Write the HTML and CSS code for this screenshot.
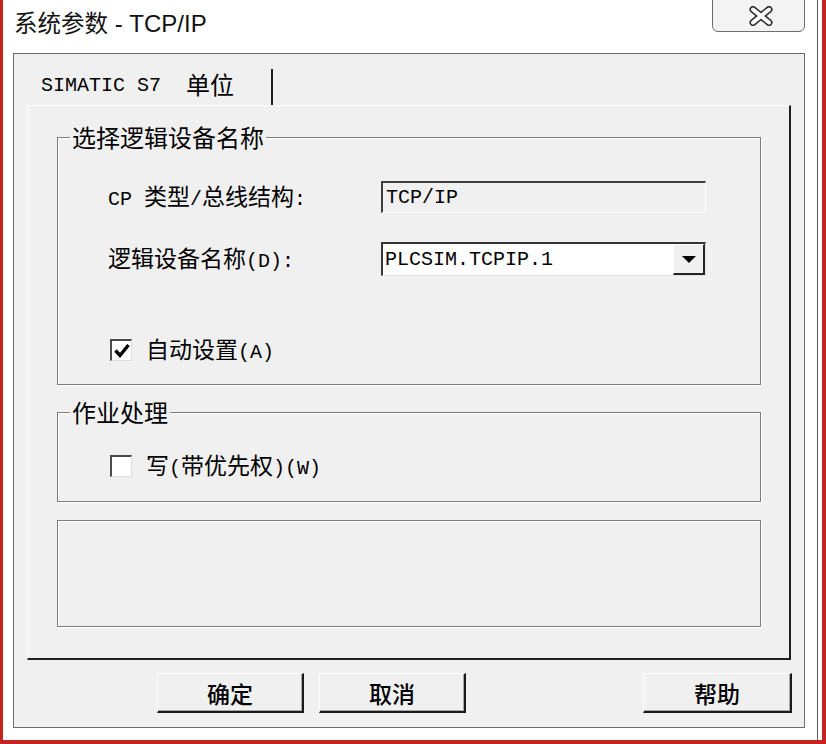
FILE: index.html
```html
<!DOCTYPE html>
<html lang="zh-CN">
<head>
<meta charset="utf-8">
<title>系统参数 - TCP/IP</title>
<link rel="stylesheet" href="styles.css">
</head>
<body>
<div class="window">
  <div class="win-inner">
    <div class="titlebar">
      <div class="title">系统参数<span class="title-lat"> - TCP/IP</span></div>
      <div class="close">
        <svg width="24" height="20" viewBox="0 0 24 20">
          <path d="M4 3.5 L20 16.5 M20 3.5 L4 16.5" stroke="#2a2a2a" stroke-width="7" stroke-linecap="round" fill="none"/>
          <path d="M4 3.5 L20 16.5 M20 3.5 L4 16.5" stroke="#ffffff" stroke-width="4" stroke-linecap="round" fill="none"/>
        </svg>
      </div>
    </div>

    <div class="dialog">
      <div class="tabstrip">
        <div class="tab"><span class="lat">SIMATIC S7</span><span class="tab-cjk">单位</span></div>
      </div>

      <div class="panel">
        <fieldset class="group g1">
          <legend>选择逻辑设备名称</legend>
          <div class="gbody b1">
            <div class="row r1">
              <div class="label"><span class="lat">CP </span>类型<span class="lat">/</span>总线结构<span class="lat">:</span></div>
              <div class="field readonly"><span class="lat">TCP/IP</span></div>
            </div>
            <div class="row r2">
              <div class="label">逻辑设备名称<span class="lat">(D):</span></div>
              <div class="field combo">
                <span class="lat combo-text">PLCSIM.TCPIP.1</span>
                <span class="drop"><span class="arrow"></span></span>
              </div>
            </div>
            <div class="row r3">
              <span class="check">
                <svg width="18" height="18" viewBox="0 0 18 18"><path d="M2.5 8.5 L7 13.5 L15.5 3" stroke="#000" stroke-width="3.4" fill="none" stroke-linejoin="miter"/></svg>
              </span>
              <span class="check-label">自动设置<span class="lat">(A)</span></span>
            </div>
          </div>
        </fieldset>

        <fieldset class="group g2">
          <legend>作业处理</legend>
          <div class="gbody b2">
            <div class="row r3">
              <span class="check"></span>
              <span class="check-label">写<span class="lat">(</span>带优先权<span class="lat">)(W)</span></span>
            </div>
          </div>
        </fieldset>

        <div class="group g3"></div>
      </div>

      <div class="buttons">
        <div class="btn ok">确定</div>
        <div class="btn cancel">取消</div>
        <div class="spacer"></div>
        <div class="btn help">帮助</div>
      </div>
    </div>
  </div>
</div>
</body>
</html>
```

FILE: styles.css
```css
* { box-sizing: border-box; }

html, body {
  margin: 0;
  padding: 0;
  background: #ffffff;
}

body {
  font-family: "Noto Sans CJK SC", sans-serif;
  color: #000;
}

.window {
  width: 826px;
  height: 744px;
  border-style: solid;
  border-color: #c4231f;
  border-width: 0 4px 4px 3px;
  padding-right: 4px;
  background: #ffffff;
  overflow: hidden;
  display: flex;
}

.win-inner {
  flex: 1;
  border-right: 1px solid #5a5a5a;
  display: flex;
  flex-direction: column;
}

.lat {
  font-family: "Liberation Mono", monospace;
  font-size: 20px;
}

/* title bar */
.titlebar {
  height: 53px;
  display: flex;
  justify-content: space-between;
  align-items: flex-start;
}

.title {
  margin-left: 11px;
  margin-top: 5px;
  font-size: 23.5px;
  line-height: 34px;
  color: #111;
}

.title-lat {
  font-family: "Liberation Sans", sans-serif;
  font-size: 24px;
}

.close {
  width: 93px;
  height: 34px;
  margin-top: -2px;
  margin-right: 12px;
  border: 1px solid #6e6e6e;
  border-radius: 0 0 6px 6px;
  background: #f3f3f3;
  display: flex;
  align-items: center;
  justify-content: center;
  padding-left: 4px;
  padding-top: 2px;
}

/* dialog frame */
.dialog {
  margin-left: 10px;
  margin-right: 12px;
  height: 675px;
  border: 1px solid #6c6c6c;
  background: #f0f0f0;
  display: flex;
  flex-direction: column;
}

.tabstrip {
  height: 51px;
  display: flex;
  align-items: flex-end;
}

.tab {
  width: 259px;
  height: 36px;
  border-right: 2px solid #1e1e1e;
  display: flex;
  align-items: center;
  padding-left: 27px;
  padding-bottom: 4px;
}

.tab-cjk {
  font-size: 24px;
  margin-left: 25px;
  margin-top: -4px;
}

.panel {
  margin: 0 13px;
  border-style: solid;
  border-width: 1px 2px 2px 1px;
  border-color: #ffffff #1e1e1e #1e1e1e #ffffff;
  padding: 16px 28px 31px 29px;
}

/* group boxes */
.group {
  margin: 0;
  padding: 0;
  min-width: 0;
  border: 1px solid #7c7c7c;
  box-shadow: 1px 1px 0 #ffffff, inset 1px 1px 0 #ffffff;
}

.group legend {
  margin-left: 12px;
  padding: 0 2px;
  font-size: 24px;
  line-height: 30px;
}

.g2 {
  margin-top: 12px;
}

.g3 {
  margin-top: 18px;
  height: 107px;
}

.gbody {
  padding-left: 50px;
}

.b1 {
  padding-top: 29px;
  padding-bottom: 23px;
}

.b2 {
  padding-top: 28px;
  padding-bottom: 24px;
}

.row {
  display: flex;
  align-items: center;
}

.r1 { height: 32px; }
.r2 { height: 34px; margin-top: 29px; }
.b1 .r3 { margin-top: 63px; }
.r3 { height: 22px; padding-left: 2px; }

.label {
  width: 273px;
  font-size: 23px;
  line-height: 32px;
}

.field {
  width: 325px;
  height: 100%;
  display: flex;
  align-items: center;
}

.readonly {
  background: #f0f0f0;
  border-style: solid;
  border-width: 2px 1px 1px 2px;
  border-color: #404040 #fafafa #fafafa #404040;
  padding-left: 3px;
}

.combo {
  background: #ffffff;
  border-style: solid;
  border-width: 2px 1px 1px 2px;
  border-color: #353535 #e2e2e2 #e2e2e2 #353535;
  padding-left: 2px;
  justify-content: space-between;
}

.drop {
  width: 32px;
  height: 100%;
  background: #f0f0f0;
  border-style: solid;
  border-width: 1px 2px 2px 1px;
  border-color: #ffffff #222222 #222222 #ffffff;
  display: flex;
  align-items: center;
  justify-content: center;
}

.arrow {
  width: 0;
  height: 0;
  border-left: 7px solid transparent;
  border-right: 7px solid transparent;
  border-top: 7px solid #000;
  margin-top: 1px;
}

.check {
  width: 22px;
  height: 22px;
  background: #ffffff;
  border-style: solid;
  border-width: 2px 1px 1px 2px;
  border-color: #4a4a4a #dcdcdc #dcdcdc #4a4a4a;
  display: flex;
  align-items: center;
  justify-content: center;
}

.check-label {
  margin-left: 14px;
  font-size: 23px;
  line-height: 30px;
}

/* buttons */
.buttons {
  margin-top: 13px;
  height: 40px;
  display: flex;
  padding-left: 143px;
  padding-right: 12px;
}

.btn {
  width: 147px;
  height: 40px;
  background: #f0f0f0;
  border-style: solid;
  border-width: 1px 2px 2px 1px;
  border-color: #ffffff #1a1a1a #1a1a1a #ffffff;
  box-shadow: inset -1px -1px 0 #a8a8a8;
  display: flex;
  align-items: center;
  justify-content: center;
  font-size: 23px;
  font-weight: 500;
  padding-top: 1px;
}

.cancel { margin-left: 15px; }
.help { width: 149px; }
.spacer { flex: 1; }
```
